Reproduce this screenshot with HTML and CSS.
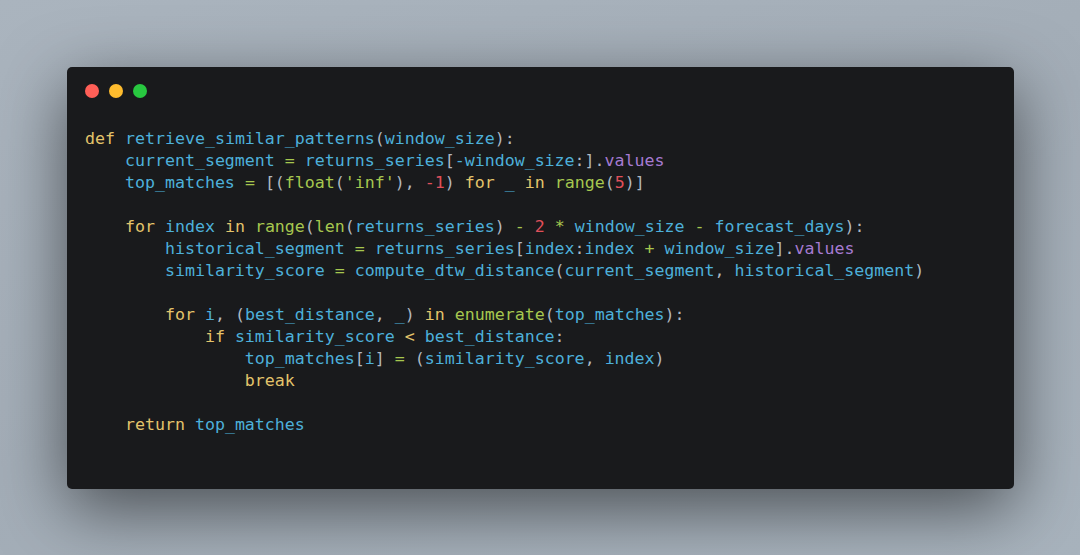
FILE: index.html
```html
<!DOCTYPE html>
<html>
<head>
<meta charset="utf-8">
<link rel="stylesheet" href="styles.css">
</head>
<body>
<div class="stage">
  <div class="window">
    <div class="controls">
      <span class="dot red"></span>
      <span class="dot yellow"></span>
      <span class="dot green"></span>
    </div>
<pre class="code"><span class="k">def</span> <span class="n">retrieve_similar_patterns</span><span class="p">(</span><span class="n">window_size</span><span class="p">):</span>
    <span class="n">current_segment</span> <span class="o">=</span> <span class="n">returns_series</span><span class="p">[</span><span class="n">-window_size</span><span class="p">:].</span><span class="a">values</span>
    <span class="n">top_matches</span> <span class="o">=</span> <span class="p">[(</span><span class="f">float</span><span class="p">(</span><span class="s">'inf'</span><span class="p">),</span> <span class="m">-1</span><span class="p">)</span> <span class="k">for</span> <span class="n">_</span> <span class="k">in</span> <span class="f">range</span><span class="p">(</span><span class="m">5</span><span class="p">)]</span>

    <span class="k">for</span> <span class="n">index</span> <span class="k">in</span> <span class="f">range</span><span class="p">(</span><span class="f">len</span><span class="p">(</span><span class="n">returns_series</span><span class="p">)</span> <span class="o">-</span> <span class="m">2</span> <span class="o">*</span> <span class="n">window_size</span> <span class="o">-</span> <span class="n">forecast_days</span><span class="p">):</span>
        <span class="n">historical_segment</span> <span class="o">=</span> <span class="n">returns_series</span><span class="p">[</span><span class="n">index</span><span class="p">:</span><span class="n">index</span> <span class="o">+</span> <span class="n">window_size</span><span class="p">].</span><span class="a">values</span>
        <span class="n">similarity_score</span> <span class="o">=</span> <span class="n">compute_dtw_distance</span><span class="p">(</span><span class="n">current_segment</span><span class="p">,</span> <span class="n">historical_segment</span><span class="p">)</span>

        <span class="k">for</span> <span class="n">i</span><span class="p">,</span> <span class="p">(</span><span class="n">best_distance</span><span class="p">,</span> <span class="n">_</span><span class="p">)</span> <span class="k">in</span> <span class="f">enumerate</span><span class="p">(</span><span class="n">top_matches</span><span class="p">):</span>
            <span class="k">if</span> <span class="n">similarity_score</span> <span class="k">&lt;</span> <span class="n">best_distance</span><span class="p">:</span>
                <span class="n">top_matches</span><span class="p">[</span><span class="n">i</span><span class="p">]</span> <span class="o">=</span> <span class="p">(</span><span class="n">similarity_score</span><span class="p">,</span> <span class="n">index</span><span class="p">)</span>
                <span class="k">break</span>

    <span class="k">return</span> <span class="n">top_matches</span></pre>
  </div>
</div>
</body>
</html>
```

FILE: styles.css
```css
html, body {
  margin: 0;
  padding: 0;
}
body {
  width: 1080px;
  height: 555px;
  overflow: hidden;
  background: linear-gradient(160deg, #aab4be 0%, #a3adb7 50%, #a8b3bd 100%);
}
.stage {
  box-sizing: border-box;
  width: 1080px;
  height: 555px;
  padding: 67px 66px 66px 67px;
  display: flex;
}
.window {
  flex: 1;
  background: #191a1c;
  border-radius: 5px;
  box-shadow: 0 20px 68px rgba(0, 0, 0, 0.55);
  padding: 17px 18px 0 18px;
  display: flex;
  flex-direction: column;
}
.controls {
  display: flex;
  gap: 10px;
  height: 14px;
}
.dot {
  width: 14px;
  height: 14px;
  border-radius: 50%;
}
.red { background: #ff5f57; }
.yellow { background: #febc2e; }
.green { background: #28c840; }
.code {
  margin: 30px 0 0 0;
  font-family: "DejaVu Sans Mono", monospace;
  font-size: 16.6px;
  line-height: 22px;
  color: #b0b8c0;
}
.k { color: #e3c46b; }
.n { color: #4db0da; }
.f { color: #a6c74f; }
.s { color: #a6c74f; }
.o { color: #a6c74f; }
.m { color: #e0505a; }
.a { color: #a67ad2; }
.p { color: #b0b8c0; }
```
